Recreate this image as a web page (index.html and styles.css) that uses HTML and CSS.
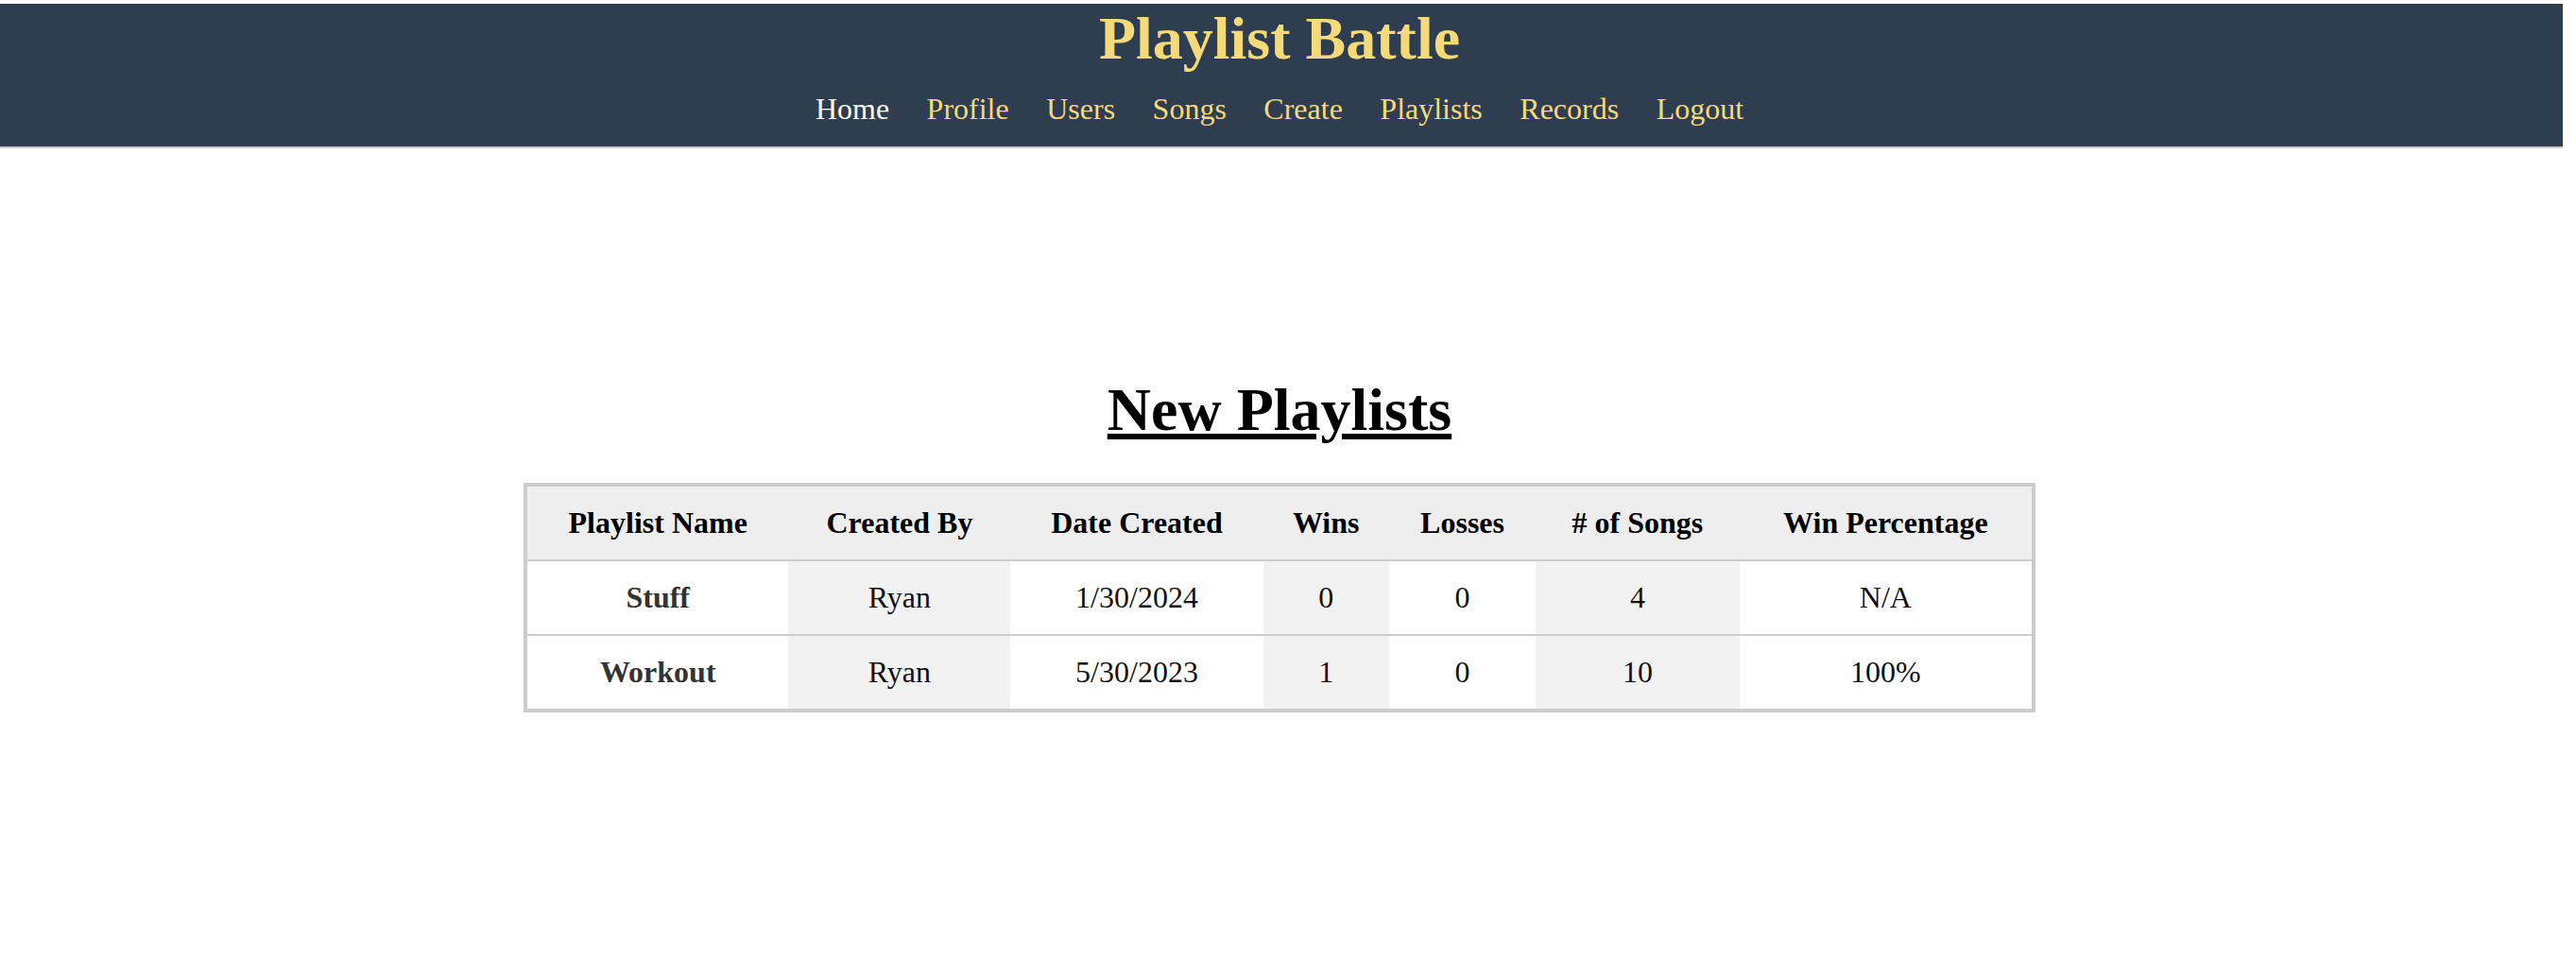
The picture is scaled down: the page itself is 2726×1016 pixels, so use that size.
FILE: index.html
```html
<!DOCTYPE html>
<html lang="en">
<head>
<meta charset="utf-8">
<title>Playlist Battle</title>
<link rel="stylesheet" href="styles.css">
</head>
<body>
<header class="site-header">
  <h1 class="site-title">Playlist Battle</h1>
  <nav class="site-nav">
    <a class="nav-link active" href="#">Home</a>
    <a class="nav-link" href="#">Profile</a>
    <a class="nav-link" href="#">Users</a>
    <a class="nav-link" href="#">Songs</a>
    <a class="nav-link" href="#">Create</a>
    <a class="nav-link" href="#">Playlists</a>
    <a class="nav-link" href="#">Records</a>
    <a class="nav-link" href="#">Logout</a>
  </nav>
</header>
<main class="content">
  <h2 class="section-title">New Playlists</h2>
  <table class="playlist-table">
    <thead>
      <tr>
        <th>Playlist Name</th>
        <th>Created By</th>
        <th>Date Created</th>
        <th>Wins</th>
        <th>Losses</th>
        <th># of Songs</th>
        <th>Win Percentage</th>
      </tr>
    </thead>
    <tbody>
      <tr>
        <td class="name">Stuff</td>
        <td>Ryan</td>
        <td>1/30/2024</td>
        <td>0</td>
        <td>0</td>
        <td>4</td>
        <td>N/A</td>
      </tr>
      <tr>
        <td class="name">Workout</td>
        <td>Ryan</td>
        <td>5/30/2023</td>
        <td>1</td>
        <td>0</td>
        <td>10</td>
        <td>100%</td>
      </tr>
    </tbody>
  </table>
</main>
</body>
</html>
```
FILE: styles.css
```css
html, body {
  margin: 0;
  padding: 0;
  background: #ffffff;
}

body {
  font-family: "Liberation Serif", "Times New Roman", serif;
  color: #000;
}

.site-header {
  margin: 4px 14px 0 0;
  padding-right: 4px;
  background: #2f3d50;
  border-bottom: 2px solid #cbcbcb;
  text-align: center;
}

.site-title {
  margin: 0;
  font-size: 64px;
  line-height: 74px;
  font-weight: bold;
  color: #f5da79;
}

.site-nav {
  display: flex;
  justify-content: center;
  gap: 39.5px;
  padding: 19px 0 21px;
}

.nav-link {
  font-size: 32px;
  line-height: 37px;
  color: #f5da79;
  text-decoration: none;
}

.nav-link.active {
  color: #ffffff;
}

.content {
  margin-right: 18px;
  padding-top: 240px;
  text-align: center;
}

.section-title {
  margin: 0 0 40px;
  font-size: 64px;
  line-height: 74px;
  font-weight: bold;
  text-decoration: underline;
}

.playlist-table {
  width: 1600px;
  margin: 0 auto;
  border-collapse: separate;
  border-spacing: 0;
  border: 4px solid #cccccc;
  font-size: 32px;
}

.playlist-table th,
.playlist-table td {
  padding: 20px;
  text-align: center;
  font-weight: normal;
}

.playlist-table th {
  background: #eeeeee;
  font-weight: bold;
  color: #000;
}

.playlist-table td {
  border-top: 2px solid #cccccc;
  background: #ffffff;
  color: #111;
}

.playlist-table td:nth-child(even) {
  background: #f2f2f2;
}

.playlist-table td.name {
  font-weight: bold;
  color: #333;
}
```
